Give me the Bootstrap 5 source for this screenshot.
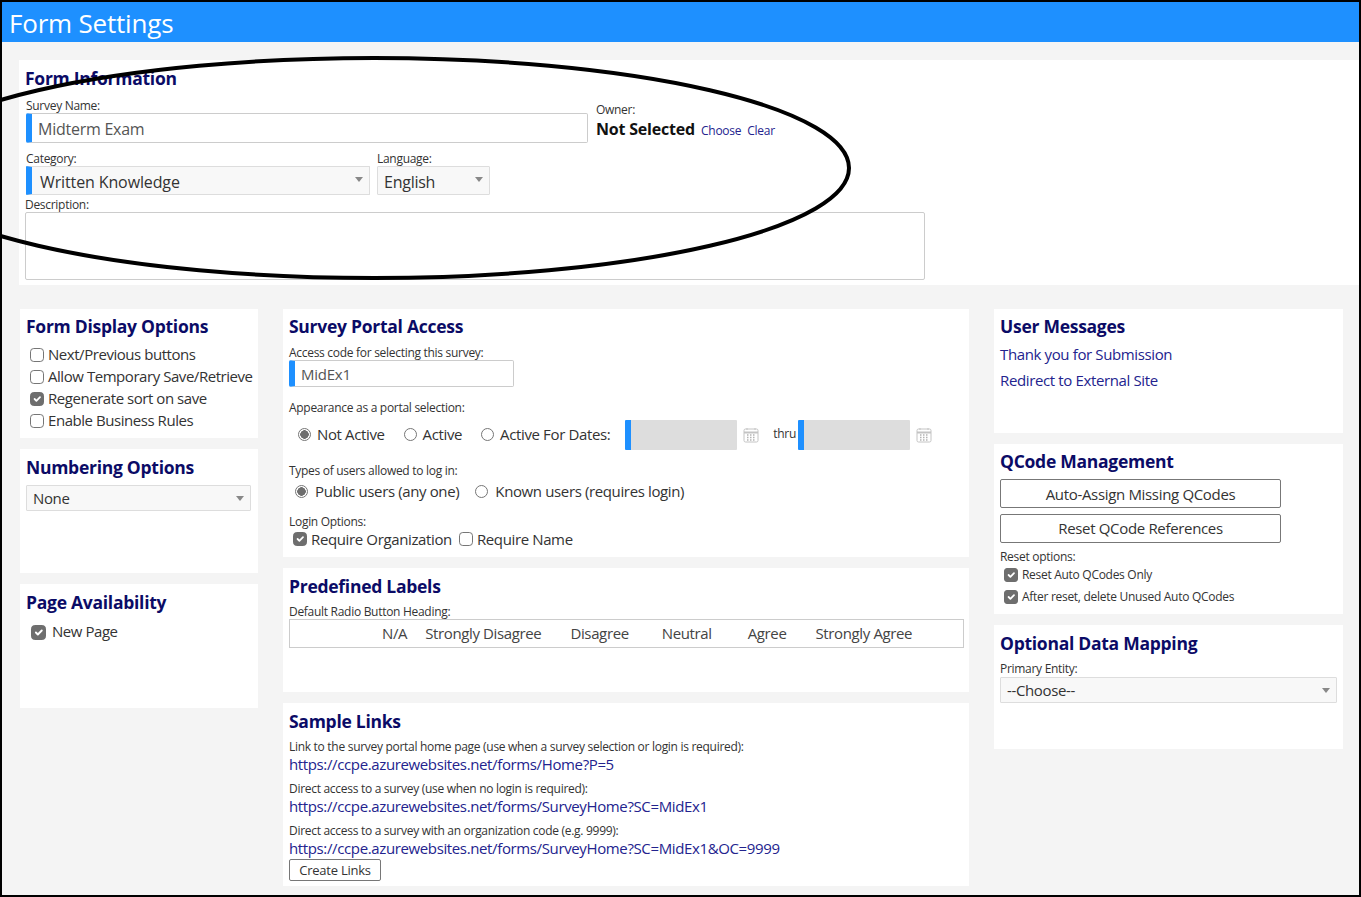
<!DOCTYPE html>
<html lang="en">
<head>
<meta charset="utf-8">
<title>Form Settings</title>
<link href="https://cdn.jsdelivr.net/npm/bootstrap@5.3.0/dist/css/bootstrap.min.css" rel="stylesheet">
<style>
html,body{height:897px;overflow:hidden}
body{background:#f4f4f4;font-family:"Open Sans","Noto Sans",sans-serif;font-size:15px;letter-spacing:-.37px;color:#333;border:solid #000;border-width:2px;position:relative}
.title-bar{background:#1e90ff;color:#fff;height:40px;font-size:26px;line-height:42px;padding-left:7px;letter-spacing:-.2px}
.page-body{padding:18px 0 0 17px;display:flex;flex-direction:column;gap:24px}
.panel-box{background:#fff;padding:6px}
.panel-title{font-size:17.5px;font-weight:700;color:#0b0b66;line-height:24px;margin:0;letter-spacing:-.27px}
.title-up{margin-top:-1px}
.info-box{height:225px;position:relative}
.mini-label{font-size:12px;line-height:14px;color:#333;display:block;margin:0;letter-spacing:-.29px}
.bar-field{border:1px solid #ccc;border-left:6px solid #1e90ff;border-radius:2px;background:#fff;color:#555;height:30px;line-height:30px;padding-left:6px;font-size:16px;letter-spacing:-.25px}
.pick{position:relative;border:1px solid #ddd;background:#f8f8f8;color:#333;border-radius:1px}
.pick::after{content:"";position:absolute;right:6px;top:10px;border:4px solid transparent;border-top:5px solid #888;border-bottom:0}
.cols{display:flex;gap:25px;align-items:flex-start;margin-left:1px}
.col-left{width:238px;flex:none;display:flex;flex-direction:column;gap:11px}
.col-mid{width:686px;flex:none;display:flex;flex-direction:column;gap:11px}
.col-right{width:349px;flex:none;display:flex;flex-direction:column;gap:11px}
.h-124{height:124px}
.opt-row{display:flex;align-items:flex-start;height:22px;padding-left:4px;gap:4px;line-height:20px;white-space:nowrap;letter-spacing:-.45px}
.opt-row .form-check-input{margin-top:4px}
.opt-small{display:flex;align-items:center;height:22px;padding-left:4px;gap:4px;white-space:nowrap}
.form-check-input{margin:0;width:14px;height:14px;border:1px solid #767676;flex:none;border-radius:3px}
.form-check-input[type=radio]{border-radius:50%;width:13px;height:13px}
.form-check-input:checked{background-color:#6e6e6e;border-color:#6e6e6e}
.form-check-input[type=radio]:checked{background-color:#fff;border-color:#767676;background-image:radial-gradient(circle,#6e6e6e 0 4px,transparent 4.5px)}
.form-check-input:focus{box-shadow:none}
a.plain-link{color:#23238e;text-decoration:none}
.link-row{line-height:20px;margin-bottom:2px}
.outline-btn{display:block;border:1px solid #777;border-radius:2px;background:#fff;color:#333;text-align:center;padding:0;font-size:15px;letter-spacing:-.33px}
.label-strip{display:flex;border:1px solid #ccc;height:29px;line-height:26px;color:#444;width:675px}
.radio-line{display:flex;align-items:center;gap:6px}
.date-bar{width:112px;height:30px;margin-top:2px;border-left:6px solid #1e90ff;background:#ddd;background-clip:padding-box;flex:none;border-radius:1px}
.cal-icon{margin-top:2px;flex:none}
</style>
</head>
<body>
<div class="title-bar">Form Settings</div>
<div class="page-body">
  <section class="panel-box info-box">
    <h2 class="panel-title">Form Information</h2>
    <div class="d-flex" style="gap:8px;margin-top:9px">
      <div style="width:562px;margin-left:1px">
        <span class="mini-label">Survey Name:</span>
        <div class="bar-field">Midterm Exam</div>
      </div>
      <div style="padding-top:4px">
        <span class="mini-label">Owner:</span>
        <div class="d-flex align-items-baseline" style="gap:6px"><b style="font-size:16px;color:#111;letter-spacing:-.2px">Not Selected</b><a class="plain-link" style="font-size:12px;letter-spacing:-.25px" href="#">Choose</a><a class="plain-link" style="font-size:12px;letter-spacing:-.25px" href="#">Clear</a></div>
      </div>
    </div>
    <div class="d-flex" style="gap:7px;margin:9px 0 0 1px">
      <div style="width:344px">
        <span class="mini-label">Category:</span>
        <div class="bar-field pick" style="height:29px;border:1px solid #ddd;border-left:6px solid #1e90ff;background:#f8f8f8;color:#333;padding-left:8px;letter-spacing:-.12px">Written Knowledge</div>
      </div>
      <div style="width:113px">
        <span class="mini-label">Language:</span>
        <div class="pick" style="height:29px;line-height:30px;font-size:16px;letter-spacing:-.25px;padding-left:6px">English</div>
      </div>
    </div>
    <span class="mini-label" style="margin-top:3px">Description:</span>
    <textarea class="d-block" aria-label="Description" style="width:900px;height:68px;border:1px solid #ccc;border-radius:2px;resize:none;outline:0"></textarea>
  </section>

  <div class="cols">
    <div class="col-left">
      <section class="panel-box" style="height:129px">
        <h2 class="panel-title title-up">Form Display Options</h2>
        <div style="margin-top:6px">
          <label class="opt-row"><input class="form-check-input" type="checkbox">Next/Previous buttons</label>
          <label class="opt-row"><input class="form-check-input" type="checkbox">Allow Temporary Save/Retrieve</label>
          <label class="opt-row"><input class="form-check-input" type="checkbox" checked>Regenerate sort on save</label>
          <label class="opt-row"><input class="form-check-input" type="checkbox">Enable Business Rules</label>
        </div>
      </section>
      <section class="panel-box h-124">
        <h2 class="panel-title">Numbering Options</h2>
        <div class="pick" style="height:26px;line-height:25px;padding-left:6px;margin-top:6px;width:225px">None</div>
      </section>
      <section class="panel-box h-124">
        <h2 class="panel-title">Page Availability</h2>
        <label class="opt-row" style="padding-left:5px;gap:6px;margin-top:7px"><input class="form-check-input" type="checkbox" checked style="width:15px;height:15px">New Page</label>
      </section>
    </div>

    <div class="col-mid">
      <section class="panel-box" style="height:248px">
        <h2 class="panel-title title-up">Survey Portal Access</h2>
        <span class="mini-label" style="margin-top:8px">Access code for selecting this survey:</span>
        <div class="bar-field" style="width:225px;height:27px;line-height:27px;font-size:15px;padding-left:6px">MidEx1</div>
        <span class="mini-label" style="margin-top:14px">Appearance as a portal selection:</span>
        <div class="radio-line" style="margin-top:4px;height:30px;padding-left:9px">
          <input class="form-check-input" type="radio" name="ap" checked aria-label="Not Active"><span style="margin-right:13px">Not Active</span>
          <input class="form-check-input" type="radio" name="ap" aria-label="Active"><span style="margin-right:13px">Active</span>
          <input class="form-check-input" type="radio" name="ap" aria-label="Active For Dates"><span style="margin-right:9px">Active For Dates:</span>
          <div class="date-bar"></div>
          <svg class="cal-icon" width="16" height="16" viewBox="0 0 16 16" aria-hidden="true"><rect x="1" y="2" width="14" height="13" rx="1.5" fill="#fff" stroke="#c4c4c4"/><path d="M1 5.5h14" stroke="#c4c4c4" stroke-width="2"/><path d="M4 1v2M12 1v2" stroke="#c4c4c4"/><path d="M4 8h1.5M7 8h1.500M10 8h1.500M4 10.500h1.500M7 10.500h1.500M10 10.500h1.500M4 13h1.500M7 13h1.500M10 13h1.500" stroke="#b4b4b4" stroke-width="1.500"/></svg>
          <span class="mini-label" style="margin:-1px -4px 0 8px">thru</span>
          <div class="date-bar"></div>
          <svg class="cal-icon" width="16" height="16" viewBox="0 0 16 16" aria-hidden="true"><rect x="1" y="2" width="14" height="13" rx="1.5" fill="#fff" stroke="#c4c4c4"/><path d="M1 5.500h14" stroke="#c4c4c4" stroke-width="2"/><path d="M4 1v2M12 1v2" stroke="#c4c4c4"/><path d="M4 8h1.500M7 8h1.500M10 8h1.500M4 10.500h1.500M7 10.500h1.500M10 10.500h1.500M4 13h1.500M7 13h1.500M10 13h1.500" stroke="#b4b4b4" stroke-width="1.500"/></svg>
        </div>
        <span class="mini-label" style="margin-top:15px">Types of users allowed to log in:</span>
        <div class="radio-line" style="margin-top:2px;height:22px;padding-left:6px;gap:7px">
          <input class="form-check-input" type="radio" name="ty" checked aria-label="Public users"><span style="margin-right:9px">Public users (any one)</span>
          <input class="form-check-input" type="radio" name="ty" aria-label="Known users"><span>Known users (requires login)</span>
        </div>
        <span class="mini-label" style="margin-top:13px">Login Options:</span>
        <div class="d-flex align-items-center" style="height:22px;padding-left:4px;gap:4px;margin-top:-1px">
          <input class="form-check-input" type="checkbox" checked aria-label="Require Organization"><span style="margin-right:3px">Require Organization</span>
          <input class="form-check-input" type="checkbox" aria-label="Require Name"><span>Require Name</span>
        </div>
      </section>
      <section class="panel-box h-124">
        <h2 class="panel-title">Predefined Labels</h2>
        <span class="mini-label" style="margin-top:7px">Default Radio Button Heading:</span>
        <div class="label-strip">
          <span style="margin-left:92px">N/A</span><span style="margin-left:18px">Strongly Disagree</span><span style="margin-left:29px">Disagree</span><span style="margin-left:33px">Neutral</span><span style="margin-left:36px">Agree</span><span style="margin-left:29px">Strongly Agree</span>
        </div>
      </section>
      <section class="panel-box" style="height:183px">
        <h2 class="panel-title">Sample Links</h2>
        <span class="mini-label" style="margin-top:7px">Link to the survey portal home page (use when a survey selection or login is required):</span>
        <a class="plain-link d-block link-row" href="#">https://ccpe.azurewebsites.net/forms/Home?P=5</a>
        <span class="mini-label" style="margin-top:8px">Direct access to a survey (use when no login is required):</span>
        <a class="plain-link d-block link-row" href="#">https://ccpe.azurewebsites.net/forms/SurveyHome?SC=MidEx1</a>
        <span class="mini-label" style="margin-top:8px">Direct access to a survey with an organization code (e.g. 9999):</span>
        <a class="plain-link d-block link-row" href="#">https://ccpe.azurewebsites.net/forms/SurveyHome?SC=MidEx1&amp;OC=9999</a>
        <button type="button" class="outline-btn" style="width:92px;height:22px;font-size:13px;letter-spacing:-.25px;line-height:20px;margin-top:-1px">Create Links</button>
      </section>
    </div>

    <div class="col-right">
      <section class="panel-box h-124">
        <h2 class="panel-title title-up">User Messages</h2>
        <a class="plain-link d-block" style="margin-top:3px;line-height:26px" href="#">Thank you for Submission</a>
        <a class="plain-link d-block" style="line-height:26px" href="#">Redirect to External Site</a>
      </section>
      <section class="panel-box" style="height:170px">
        <h2 class="panel-title title-up">QCode Management</h2>
        <button type="button" class="outline-btn" style="width:281px;height:29px;margin-top:6px;padding-top:1px">Auto-Assign Missing QCodes</button>
        <button type="button" class="outline-btn" style="width:281px;height:29px;margin-top:6px">Reset QCode References</button>
        <span class="mini-label" style="margin-top:7px">Reset options:</span>
        <label class="opt-small mini-label"><input class="form-check-input" type="checkbox" checked>Reset Auto QCodes Only</label>
        <label class="opt-small mini-label"><input class="form-check-input" type="checkbox" checked>After reset, delete Unused Auto QCodes</label>
      </section>
      <section class="panel-box h-124">
        <h2 class="panel-title">Optional Data Mapping</h2>
        <span class="mini-label" style="margin-top:7px">Primary Entity:</span>
        <div class="pick" style="height:26px;line-height:25px;padding-left:6px;width:337px;margin-top:1px">--Choose--</div>
      </section>
    </div>
  </div>
</div>
<svg width="1357" height="893" style="position:absolute;left:-2px;top:-2px;pointer-events:none" viewBox="0 0 1357 893" fill="none" aria-hidden="true"><ellipse cx="374" cy="168" rx="475" ry="110" stroke="#000" stroke-width="4"/></svg>
<script src="https://cdn.jsdelivr.net/npm/bootstrap@5.3.0/dist/js/bootstrap.bundle.min.js"></script>
</body>
</html>
